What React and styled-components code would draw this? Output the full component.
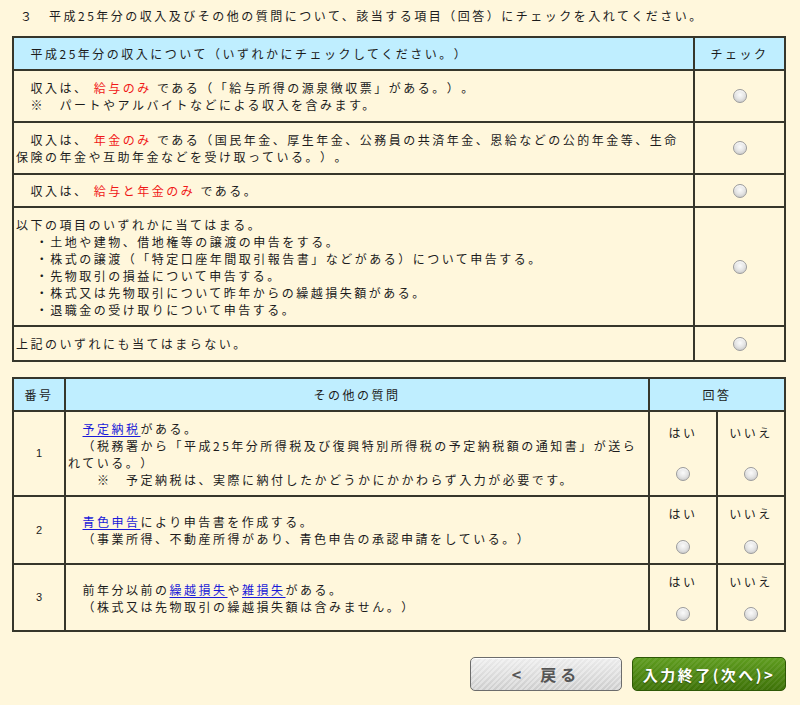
import React from "react";
import styled, { createGlobalStyle, css } from "styled-components";

const GlobalStyle = createGlobalStyle`
  html, body { margin: 0; padding: 0; background: #fff7dc; }
  body {
    font-family: "Noto Sans CJK JP", "Noto Sans", sans-serif;
    font-size: 12px;
    color: #1c1c1c;
    text-spacing-trim: space-all;
  }
`;

const Page = styled.div`
  width: 800px;
  height: 705px;
  box-sizing: border-box;
  padding: 7px 14px 0 12px;
  background: #fff7dc;
`;

const Title = styled.p`
  margin: 0 0 12px 8px;
  line-height: 17px;
  letter-spacing: 2.5px;
`;

const Table = styled.table`
  width: 774px;
  border-collapse: collapse;
  table-layout: fixed;
  border: 2px solid #36362b;
  margin-bottom: ${(p) => p.$gap || 0}px;
`;

const Col = styled.col`
  width: ${(p) => (p.$w ? `${p.$w}px` : "auto")};
`;

const Row = styled.tr`
  height: ${(p) => p.$h}px;
`;

const Head = styled.th`
  background: #bfeeff;
  font-weight: normal;
  text-align: ${(p) => p.$align || "center"};
  padding: 0 2px;
  border: 2px solid #36362b;
  letter-spacing: 2.5px;
  line-height: 17px;
`;

const Cell = styled.td`
  background: #fff7dc;
  border: 2px solid #36362b;
  padding: ${(p) => (p.$flush ? "0" : "0 2px")};
  vertical-align: middle;
  text-align: ${(p) => p.$align || "left"};
  letter-spacing: 2.5px;
  line-height: 17px;
`;

const NumCell = styled(Cell)`
  font-family: "Liberation Sans", Arial, sans-serif;
  font-size: 11px;
  letter-spacing: 0;
  text-align: center;
`;

const Red = styled.span`
  color: #f01818;
`;

const Link = styled.a`
  color: #1a1ad8;
  text-decoration: underline;
  text-underline-offset: 2px;
  cursor: pointer;
`;

const Radio = styled.input.attrs({ type: "radio", readOnly: true })`
  appearance: none;
  display: block;
  box-sizing: border-box;
  width: 14px;
  height: 14px;
  margin: 0 auto;
  border-radius: 50%;
  border: 1px solid #9c9c9c;
  background: radial-gradient(circle at 50% 40%, #fbfbfb 0%, #e6e6e6 45%, #bdbdbd 100%);
  box-shadow: inset 0 1px 1px rgba(255, 255, 255, 0.9);
`;

const Answer = styled.div`
  display: grid;
  grid-template-rows: 1fr 1fr;
  height: ${(p) => p.$h}px;
  align-items: center;
  justify-items: center;
  letter-spacing: 2.5px;
`;

const Buttons = styled.div`
  display: flex;
  justify-content: flex-end;
  gap: 10px;
  margin-top: 25px;
`;

const Button = styled.button`
  width: ${(p) => p.$w}px;
  height: 34px;
  border-radius: 5px;
  font-family: "Noto Sans CJK JP", sans-serif;
  font-weight: bold;
  cursor: pointer;
  padding: 0;
  ${(p) =>
    p.$primary
      ? css`
          color: #fff;
          font-size: 15px;
          letter-spacing: 2.5px;
          border: 1px solid #2e5806;
          background: repeating-linear-gradient(135deg, rgba(255, 255, 255, 0.07) 0 2px, transparent 2px 4px),
            linear-gradient(#5f9d1f, #3e7208);
          text-shadow: 0 1px 1px rgba(0, 0, 0, 0.35);
        `
      : css`
          color: #555;
          font-size: 16px;
          letter-spacing: 4px;
          border: 1px solid #6c6c6c;
          background: repeating-linear-gradient(135deg, rgba(255, 255, 255, 0.35) 0 2px, transparent 2px 4px),
            linear-gradient(#ececec, #cdcdcd);
          box-shadow: inset 0 1px 0 #fff;
        `}
`;

const incomeRows = [
  {
    h: 52,
    text: (
      <>
        {"\u3000収入は、 "}<Red>給与のみ</Red>{" である（「給与所得の源泉徴収票」がある。）。"}
        <br />
        {"\u3000※\u3000パートやアルバイトなどによる収入を含みます。"}
      </>
    ),
  },
  {
    h: 52,
    text: (
      <>
        {"\u3000収入は、 "}<Red>年金のみ</Red>{" である（国民年金、厚生年金、公務員の共済年金、恩給などの公的年金等、生命"}
        <br />
        {"保険の年金や互助年金などを受け取っている。）。"}
      </>
    ),
  },
  {
    h: 33,
    text: (
      <>
        {"\u3000収入は、 "}<Red>給与と年金のみ</Red>{" である。"}
      </>
    ),
  },
  {
    h: 119,
    text: (
      <>
        以下の項目のいずれかに当てはまる。
        <br />
        {"\u3000\u00a0・土地や建物、借地権等の譲渡の申告をする。"}
        <br />
        {"\u3000\u00a0・株式の譲渡（「特定口座年間取引報告書」などがある）について申告する。"}
        <br />
        {"\u3000\u00a0・先物取引の損益について申告する。"}
        <br />
        {"\u3000\u00a0・株式又は先物取引について昨年からの繰越損失額がある。"}
        <br />
        {"\u3000\u00a0・退職金の受け取りについて申告する。"}
      </>
    ),
  },
  { h: 35, text: "上記のいずれにも当てはまらない。" },
];

const otherRows = [
  {
    no: 1,
    h: 85,
    text: (
      <>
        {"\u3000"}<Link>予定納税</Link>がある。
        <br />
        {"\u3000（税務署から「平成25年分所得税及び復興特別所得税の予定納税額の通知書」が送ら"}
        <br />
        れている。）
        <br />
        {"\u3000\u3000※\u3000予定納税は、実際に納付したかどうかにかかわらず入力が必要です。"}
      </>
    ),
  },
  {
    no: 2,
    h: 68,
    text: (
      <>
        {"\u3000"}<Link>青色申告</Link>により申告書を作成する。
        <br />
        {"\u3000（事業所得、不動産所得があり、青色申告の承認申請をしている。）"}
      </>
    ),
  },
  {
    no: 3,
    h: 67,
    text: (
      <>
        {"\u3000前年分以前の"}<Link>繰越損失</Link>や<Link>雑損失</Link>がある。
        <br />
        {"\u3000（株式又は先物取引の繰越損失額は含みません。）"}
      </>
    ),
  },
];

export default function App() {
  return (
    <Page>
      <GlobalStyle />
      <Title>３　平成25年分の収入及びその他の質問について、該当する項目（回答）にチェックを入れてください。</Title>

      <Table $gap={15}>
        <colgroup>
          <Col />
          <Col $w={91} />
        </colgroup>
        <thead>
          <Row $h={33}>
            <Head $align="left">{"\u3000平成25年分の収入について（いずれかにチェックしてください。）"}</Head>
            <Head>チェック</Head>
          </Row>
        </thead>
        <tbody>
          {incomeRows.map((r, i) => (
            <Row key={i} $h={r.h}>
              <Cell>{r.text}</Cell>
              <Cell $flush>
                <Radio name="income" />
              </Cell>
            </Row>
          ))}
        </tbody>
      </Table>

      <Table>
        <colgroup>
          <Col $w={52} />
          <Col />
          <Col $w={68} />
          <Col $w={68} />
        </colgroup>
        <thead>
          <Row $h={33}>
            <Head>番号</Head>
            <Head>その他の質問</Head>
            <Head colSpan={2}>回答</Head>
          </Row>
        </thead>
        <tbody>
          {otherRows.map((r) => (
            <Row key={r.no} $h={r.h}>
              <NumCell>{r.no}</NumCell>
              <Cell>{r.text}</Cell>
              <Cell $flush>
                <Answer $h={r.h - 2}>
                  <span>はい</span>
                  <Radio name={`q${r.no}`} />
                </Answer>
              </Cell>
              <Cell $flush>
                <Answer $h={r.h - 2}>
                  <span>いいえ</span>
                  <Radio name={`q${r.no}`} />
                </Answer>
              </Cell>
            </Row>
          ))}
        </tbody>
      </Table>

      <Buttons>
        <Button $w={152}>{"<\u00a0\u00a0戻る"}</Button>
        <Button $w={154} $primary>入力終了(次へ)&gt;</Button>
      </Buttons>
    </Page>
  );
}
